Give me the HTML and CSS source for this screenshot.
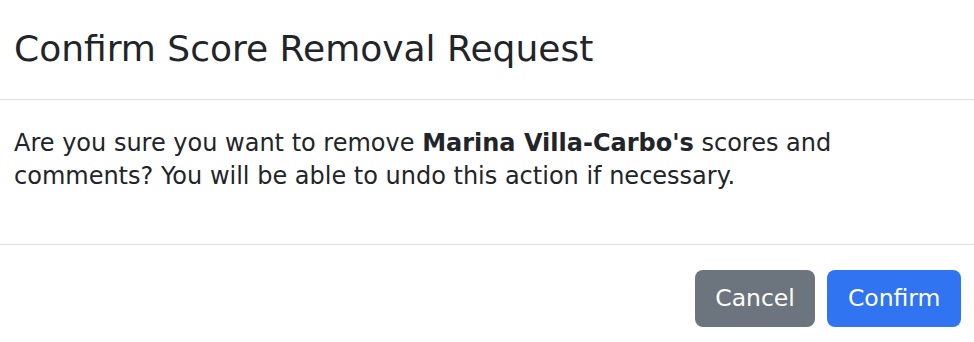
FILE: index.html
```html
<!DOCTYPE html>
<html lang="en">
<head>
<meta charset="utf-8">
<title>Confirm Score Removal Request</title>
<link rel="stylesheet" href="styles.css">
</head>
<body>
<div class="modal">
  <div class="modal-header">
    <h5 class="modal-title">Confirm Score Removal Request</h5>
  </div>
  <div class="modal-body">
    <p>Are you sure you want to remove <strong>Marina Villa-Carbo's</strong> scores and comments? You will be able to undo this action if necessary.</p>
  </div>
  <div class="modal-footer">
    <button class="btn btn-secondary" type="button">Cancel</button>
    <button class="btn btn-primary" type="button">Confirm</button>
  </div>
</div>
</body>
</html>
```

FILE: styles.css
```css
html, body {
  margin: 0;
  padding: 0;
  background: #ffffff;
}
body {
  font-family: "DejaVu Sans", Verdana, sans-serif;
  color: #212529;
}
.modal {
  width: 974px;
  display: flex;
  flex-direction: column;
}
.modal-header {
  height: 100px;
  display: flex;
  align-items: center;
  padding: 0 14px 2px;
  border-bottom: 1px solid #dee2e6;
  box-sizing: border-box;
}
.modal-title {
  margin: 0;
  font-size: 36px;
  font-weight: 400;
  line-height: 1.2;
}
.modal-body {
  padding: 27px 14px 51px;
  border-bottom: 1px solid #dee2e6;
}
.modal-body p {
  margin: 0;
  font-size: 24px;
  line-height: 33px;
}
.modal-body strong {
  font-weight: 700;
}
.modal-footer {
  display: flex;
  justify-content: flex-end;
  gap: 12px;
  padding: 25px 13px 15px;
}
.btn {
  font-family: inherit;
  font-size: 23.5px;
  line-height: 1;
  height: 57px;
  padding: 0 20.5px;
  border: none;
  border-radius: 8px;
  color: #ffffff;
  cursor: pointer;
}
.btn-secondary {
  background: #6c757d;
}
.btn-primary {
  background: #3174f1;
}
```
